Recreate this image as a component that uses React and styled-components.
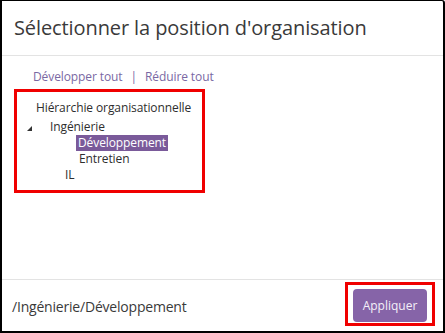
import React from 'react';
import styled, { createGlobalStyle } from 'styled-components';

const Global = createGlobalStyle`
  html, body {
    margin: 0;
    padding: 0;
    background: #ffffff;
  }
  body {
    font-family: "Open Sans", "Noto Sans", sans-serif;
  }
`;

const Dialog = styled.div`
  width: 445px;
  height: 333px;
  box-sizing: border-box;
  border-top: 1px solid #000;
  border-left: 2px solid #000;
  border-right: 2px solid #000;
  border-bottom: 2px solid #000;
  border-top-right-radius: 3px;
  display: flex;
  flex-direction: column;
  background: #fff;
`;

const Header = styled.div`
  height: 55px;
  box-sizing: border-box;
  padding: 13px 0 0 12px;
  border-bottom: 1px solid #e3e3e3;
  font-size: 20px;
  color: #3a3a3a;
  letter-spacing: -0.1px;
`;

const Body = styled.div`
  flex: 1;
  padding: 12px 0 0 12px;
`;

const Toolbar = styled.div`
  display: flex;
  align-items: center;
  gap: 8px;
  padding-left: 19px;
  font-size: 12px;
  color: #7a68a3;
  letter-spacing: -0.1px;
`;

const Sep = styled.span`
  color: #7a68a3;
`;

const TreeBox = styled.div`
  margin-top: 4px;
  width: 191px;
  height: 104px;
  box-sizing: border-box;
  border: 3px solid #f00000;
  padding: 6px 0 0 0;
  font-size: 12px;
  color: #2e2e2e;
  letter-spacing: -0.1px;
`;

const Node = styled.div`
  display: flex;
  align-items: center;
  height: ${p => p.$height || 16}px;
  padding-left: ${p => p.$indent}px;
`;

const Toggle = styled.span`
  width: 0;
  height: 0;
  border-left: 5px solid transparent;
  border-bottom: 5px solid #333;
  margin-top: 4px;
  margin-right: 16px;
`;

const Label = styled.span`
  padding: 0 2px;
  line-height: 16px;
  background: ${p => (p.$selected ? '#7a5a9a' : 'transparent')};
  color: ${p => (p.$selected ? '#ffffff' : '#2e2e2e')};
`;

const Footer = styled.div`
  height: 52px;
  box-sizing: border-box;
  border-top: 1px solid #e3e3e3;
  display: flex;
  align-items: flex-start;
  justify-content: space-between;
  padding: 2px 8px 0 10px;
`;

const Path = styled.div`
  margin-top: 16px;
  font-size: 14px;
  line-height: 18px;
  color: #3a3a3a;
  letter-spacing: -0.2px;
`;

const Highlight = styled.div`
  border: 3px solid #f00000;
  padding: 4px 5px 1px 5px;
  display: flex;
`;

const ApplyButton = styled.button`
  width: 74px;
  height: 33px;
  border: none;
  border-radius: 4px;
  background: #8664a8;
  color: #f4f0f8;
  font-family: "Open Sans", "Noto Sans", sans-serif;
  font-size: 12px;
  padding: 0;
  cursor: pointer;
`;

export default function App() {
  return (
    <>
      <Global />
      <Dialog>
        <Header>Sélectionner la position d'organisation</Header>
        <Body>
          <Toolbar>
            <span>Développer tout</span>
            <Sep>|</Sep>
            <span>Réduire tout</span>
          </Toolbar>
          <TreeBox>
            <Node $indent={17} $height={20}><Label>Hiérarchie organisationnelle</Label></Node>
            <Node $indent={10} $height={17}><Toggle /><Label>Ingénierie</Label></Node>
            <Node $indent={59}><Label $selected>Développement</Label></Node>
            <Node $indent={60}><Label>Entretien</Label></Node>
            <Node $indent={46}><Label>IL</Label></Node>
          </TreeBox>
        </Body>
        <Footer>
          <Path>/Ingénierie/Développement</Path>
          <Highlight>
            <ApplyButton>Appliquer</ApplyButton>
          </Highlight>
        </Footer>
      </Dialog>
    </>
  );
}
